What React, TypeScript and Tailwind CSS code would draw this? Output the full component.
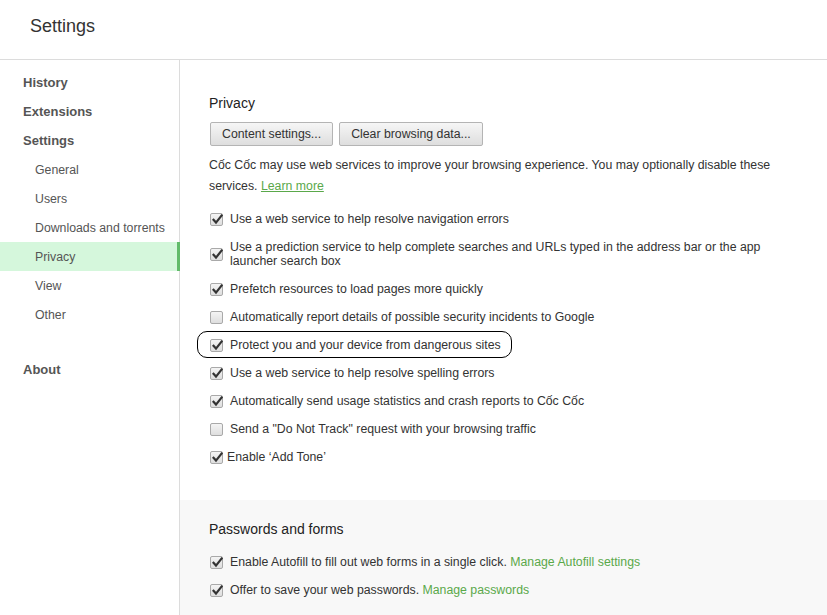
import React from "react";

const font = { fontFamily: '"Liberation Sans", Arial, sans-serif' };

function Check({ checked }: { checked: boolean }) {
  return (
    <span className="relative inline-flex h-[13px] w-[13px] shrink-0 items-center justify-center rounded-[2px] border border-[#a9a9a9] bg-gradient-to-b from-[#f4f4f4] to-[#dedede]">
      {checked && (
        <svg width="11" height="11" viewBox="0 0 11 11" className="absolute left-[1px] top-[0px]">
          <path d="M1.5 5.8 L4 8.6 L9.6 1.6" fill="none" stroke="#333" strokeWidth="2.2" strokeLinecap="square" strokeLinejoin="miter" />
        </svg>
      )}
    </span>
  );
}

function Row({
  checked,
  children,
  tall,
  circled,
}: {
  checked: boolean;
  children: React.ReactNode;
  tall?: boolean;
  circled?: boolean;
}) {
  return (
    <div className={`flex items-center ${tall ? "h-[42px]" : "h-[28px]"}`}>
      <div className={`flex items-center gap-[7px] ${circled ? "relative" : ""}`}>
        {circled && (
          <span className="pointer-events-none absolute left-[-13px] right-[-11px] top-[-7px] bottom-[-6px] rounded-[10px] border border-black" />
        )}
        <Check checked={checked} />
        <span className="leading-[14px]">{children}</span>
      </div>
    </div>
  );
}

export default function App() {
  const sidebarTop = ["History", "Extensions", "Settings"];
  const sub = ["General", "Users", "Downloads and torrents", "Privacy", "View", "Other"];
  return (
    <div className="h-[615px] w-[827px] overflow-hidden bg-white text-[12.3px] text-[#333]" style={font}>
      <header className="flex h-[60px] items-start border-b border-[#dcdcdc] pl-[30px] pt-[14px]">
        <h1 className="text-[18px] leading-[24px] text-[#333]">Settings</h1>
      </header>
      <div className="flex h-[555px]">
        <nav className="w-[180px] shrink-0 border-r border-[#dcdcdc] pt-[8px]">
          {sidebarTop.map((t) => (
            <div key={t} className="flex h-[29px] items-center pl-[23px] text-[13px] font-bold text-[#555]">
              {t}
            </div>
          ))}
          {sub.map((t) => (
            <div
              key={t}
              className={`relative flex h-[29px] items-center pl-[35px] pt-[2px] text-[#555] ${t === "Privacy" ? "bg-[#d5f7dc]" : ""}`}
            >
              {t}
              {t === "Privacy" && <span className="absolute right-[-1px] top-0 h-full w-[3px] bg-[#62bb6a]" />}
            </div>
          ))}
          <div className="mt-[26px] flex h-[29px] items-center pl-[23px] text-[13px] font-bold text-[#555]">About</div>
        </nav>
        <main className="flex flex-1 flex-col">
          <section className="pl-[29px] pr-[40px] pt-[33px]">
            <h2 className="text-[14px] leading-[20px] text-[#222]">Privacy</h2>
            <div className="mt-[9px] flex gap-[6px] pl-[1px]">
              <button className="h-[24px] rounded-[2px] border border-[#b4b4b4] bg-gradient-to-b from-[#f6f6f6] to-[#dedede] px-[11px] text-[12.3px] text-[#333]">
                Content settings...
              </button>
              <button className="h-[24px] rounded-[2px] border border-[#b4b4b4] bg-gradient-to-b from-[#f6f6f6] to-[#dedede] px-[11px] text-[12.3px] text-[#333]">
                Clear browsing data...
              </button>
            </div>
            <p className="mt-[9px] leading-[21px]">
              Cốc Cốc may use web services to improve your browsing experience. You may optionally disable these services.{" "}
              <a className="text-[#5aa84a] underline">Learn more</a>
            </p>
            <div className="mt-[8px] pl-[1px]">
              <Row checked>Use a web service to help resolve navigation errors</Row>
              <Row checked tall>
                Use a prediction service to help complete searches and URLs typed in the address bar or the app launcher search box
              </Row>
              <Row checked>Prefetch resources to load pages more quickly</Row>
              <Row checked={false}>Automatically report details of possible security incidents to Google</Row>
              <Row checked circled>
                Protect you and your device from dangerous sites
              </Row>
              <Row checked>Use a web service to help resolve spelling errors</Row>
              <Row checked>Automatically send usage statistics and crash reports to Cốc Cốc</Row>
              <Row checked={false}>Send a "Do Not Track" request with your browsing traffic</Row>
              <div className="flex h-[28px] items-center gap-[4px]">
                <Check checked />
                <span>Enable ‘Add Tone’</span>
              </div>
            </div>
          </section>
          <section className="mt-[29px] flex-1 bg-[#f8f8f8] pl-[29px] pt-[19px]">
            <h2 className="text-[14px] leading-[20px] text-[#222]">Passwords and forms</h2>
            <div className="mt-[9px] pl-[1px]">
              <Row checked>
                Enable Autofill to fill out web forms in a single click.{" "}
                <a className="text-[#5aa84a]">Manage Autofill settings</a>
              </Row>
              <Row checked>
                Offer to save your web passwords. <a className="text-[#5aa84a]">Manage passwords</a>
              </Row>
            </div>
          </section>
        </main>
      </div>
    </div>
  );
}
